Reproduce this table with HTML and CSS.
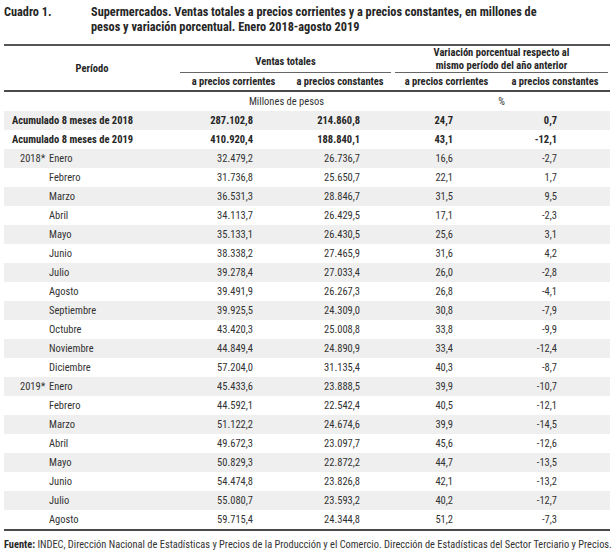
FILE: index.html
```html
<!DOCTYPE html>
<html lang="es">
<head>
<meta charset="utf-8">
<link rel="stylesheet" href="styles.css">
</head>
<body>
<div class="page">
  <div class="caption">
    <div class="label">Cuadro 1.</div>
    <div class="title">Supermercados. Ventas totales a precios corrientes y a precios constantes, en millones de<br>pesos y variación porcentual. Enero 2018-agosto 2019</div>
  </div>
  <table class="data">
    <colgroup>
      <col class="c1"><col class="c2"><col class="c3"><col class="c4"><col class="c5">
    </colgroup>
    <thead>
      <tr class="h1">
        <th rowspan="2" class="period-h">Período</th>
        <th colspan="2"><div class="grp">Ventas totales</div></th>
        <th colspan="2"><div class="grp grp-last">Variación porcentual respecto al<br>mismo período del año anterior</div></th>
      </tr>
      <tr class="h2">
        <th>a precios corrientes</th>
        <th>a precios constantes</th>
        <th>a precios corrientes</th>
        <th>a precios constantes</th>
      </tr>
    </thead>
    <tbody>
      <tr class="unit"><td></td><td colspan="2">Millones de pesos</td><td colspan="2">%</td></tr>
      <tr class="alt strong"><td class="per acc">Acumulado 8 meses de 2018</td><td>287.102,8</td><td>214.860,8</td><td>24,7</td><td>0,7</td></tr>
      <tr class="strong"><td class="per acc">Acumulado 8 meses de 2019</td><td>410.920,4</td><td>188.840,1</td><td>43,1</td><td>-12,1</td></tr>
      <tr class="alt"><td class="per"><span class="yr">2018*</span>Enero</td><td>32.479,2</td><td>26.736,7</td><td>16,6</td><td>-2,7</td></tr>
      <tr><td class="per"><span class="yr"></span>Febrero</td><td>31.736,8</td><td>25.650,7</td><td>22,1</td><td>1,7</td></tr>
      <tr class="alt"><td class="per"><span class="yr"></span>Marzo</td><td>36.531,3</td><td>28.846,7</td><td>31,5</td><td>9,5</td></tr>
      <tr><td class="per"><span class="yr"></span>Abril</td><td>34.113,7</td><td>26.429,5</td><td>17,1</td><td>-2,3</td></tr>
      <tr class="alt"><td class="per"><span class="yr"></span>Mayo</td><td>35.133,1</td><td>26.430,5</td><td>25,6</td><td>3,1</td></tr>
      <tr><td class="per"><span class="yr"></span>Junio</td><td>38.338,2</td><td>27.465,9</td><td>31,6</td><td>4,2</td></tr>
      <tr class="alt"><td class="per"><span class="yr"></span>Julio</td><td>39.278,4</td><td>27.033,4</td><td>26,0</td><td>-2,8</td></tr>
      <tr><td class="per"><span class="yr"></span>Agosto</td><td>39.491,9</td><td>26.267,3</td><td>26,8</td><td>-4,1</td></tr>
      <tr class="alt"><td class="per"><span class="yr"></span>Septiembre</td><td>39.925,5</td><td>24.309,0</td><td>30,8</td><td>-7,9</td></tr>
      <tr><td class="per"><span class="yr"></span>Octubre</td><td>43.420,3</td><td>25.008,8</td><td>33,8</td><td>-9,9</td></tr>
      <tr class="alt"><td class="per"><span class="yr"></span>Noviembre</td><td>44.849,4</td><td>24.890,9</td><td>33,4</td><td>-12,4</td></tr>
      <tr><td class="per"><span class="yr"></span>Diciembre</td><td>57.204,0</td><td>31.135,4</td><td>40,3</td><td>-8,7</td></tr>
      <tr class="alt"><td class="per"><span class="yr">2019*</span>Enero</td><td>45.433,6</td><td>23.888,5</td><td>39,9</td><td>-10,7</td></tr>
      <tr><td class="per"><span class="yr"></span>Febrero</td><td>44.592,1</td><td>22.542,4</td><td>40,5</td><td>-12,1</td></tr>
      <tr class="alt"><td class="per"><span class="yr"></span>Marzo</td><td>51.122,2</td><td>24.674,6</td><td>39,9</td><td>-14,5</td></tr>
      <tr><td class="per"><span class="yr"></span>Abril</td><td>49.672,3</td><td>23.097,7</td><td>45,6</td><td>-12,6</td></tr>
      <tr class="alt"><td class="per"><span class="yr"></span>Mayo</td><td>50.829,3</td><td>22.872,2</td><td>44,7</td><td>-13,5</td></tr>
      <tr><td class="per"><span class="yr"></span>Junio</td><td>54.474,8</td><td>23.826,8</td><td>42,1</td><td>-13,2</td></tr>
      <tr class="alt"><td class="per"><span class="yr"></span>Julio</td><td>55.080,7</td><td>23.593,2</td><td>40,2</td><td>-12,7</td></tr>
      <tr class="last"><td class="per"><span class="yr"></span>Agosto</td><td>59.715,4</td><td>24.344,8</td><td>51,2</td><td>-7,3</td></tr>
    </tbody>
  </table>
  <p class="source"><b>Fuente:</b> INDEC, Dirección Nacional de Estadísticas y Precios de la Producción y el Comercio. Dirección de Estadísticas del Sector Terciario y Precios.</p>
</div>
</body>
</html>
```
FILE: styles.css
```css
html, body {
  margin: 0;
  padding: 0;
  background: #ffffff;
}
body {
  font-family: "Roboto Condensed", Roboto, "Liberation Sans", sans-serif;
  font-stretch: 75%;
  color: #333333;
}
.page {
  padding: 0 6px 0 4px;
}
.caption {
  display: flex;
  padding-top: 5px;
  height: 39px;
  font-weight: bold;
  font-size: 12.3px;
  line-height: 15px;
  color: #262626;
}
.label {
  width: 87px;
  flex: none;
}
.title {
  white-space: nowrap;
}
.data {
  width: 606px;
  border-collapse: collapse;
  table-layout: fixed;
  font-size: 10.5px;
}
.c1 { width: 176px; }
.c2 { width: 107px; }
.c3 { width: 106px; }
.c4 { width: 107px; }
.c5 { width: 110px; }
thead {
  border-top: 2px solid #555555;
  border-bottom: 2px solid #4a4a4a;
}
th {
  font-weight: bold;
  color: #262626;
  text-align: center;
  padding: 0;
  white-space: nowrap;
}
.h1 th {
  height: 26px;
  vertical-align: bottom;
  line-height: 13px;
}
.h1 .period-h {
  vertical-align: middle;
}
.grp {
  border-bottom: 1px solid #666666;
  margin: 0 2px 0 0;
  padding-bottom: 4px;
}
.grp-last {
  margin: 0 2px 0 2px;
  padding-bottom: 0;
}
.h2 th {
  height: 17px;
  line-height: 17px;
}
td {
  height: 19px;
  padding: 0;
  line-height: 19px;
  text-align: right;
  white-space: nowrap;
}
td:nth-child(2) { padding-right: 34px; }
td:nth-child(3) { padding-right: 33px; }
td:nth-child(4) { padding-right: 47px; }
td:nth-child(5) { padding-right: 53px; }
.unit td {
  text-align: center;
  padding-right: 0;
}
.alt td {
  background: #efefef;
}
.strong td {
  font-weight: bold;
  color: #262626;
}
td.per {
  text-align: left;
  padding-left: 16px;
}
td.per.acc {
  padding-left: 8px;
}
.yr {
  display: inline-block;
  width: 29px;
}
.last td {
  border-bottom: 2px solid #4a4a4a;
}
.source {
  margin: 7px 0 0 0;
  font-size: 10.4px;
  line-height: 14px;
  color: #333333;
  white-space: nowrap;
}
.source b {
  color: #262626;
}
```
